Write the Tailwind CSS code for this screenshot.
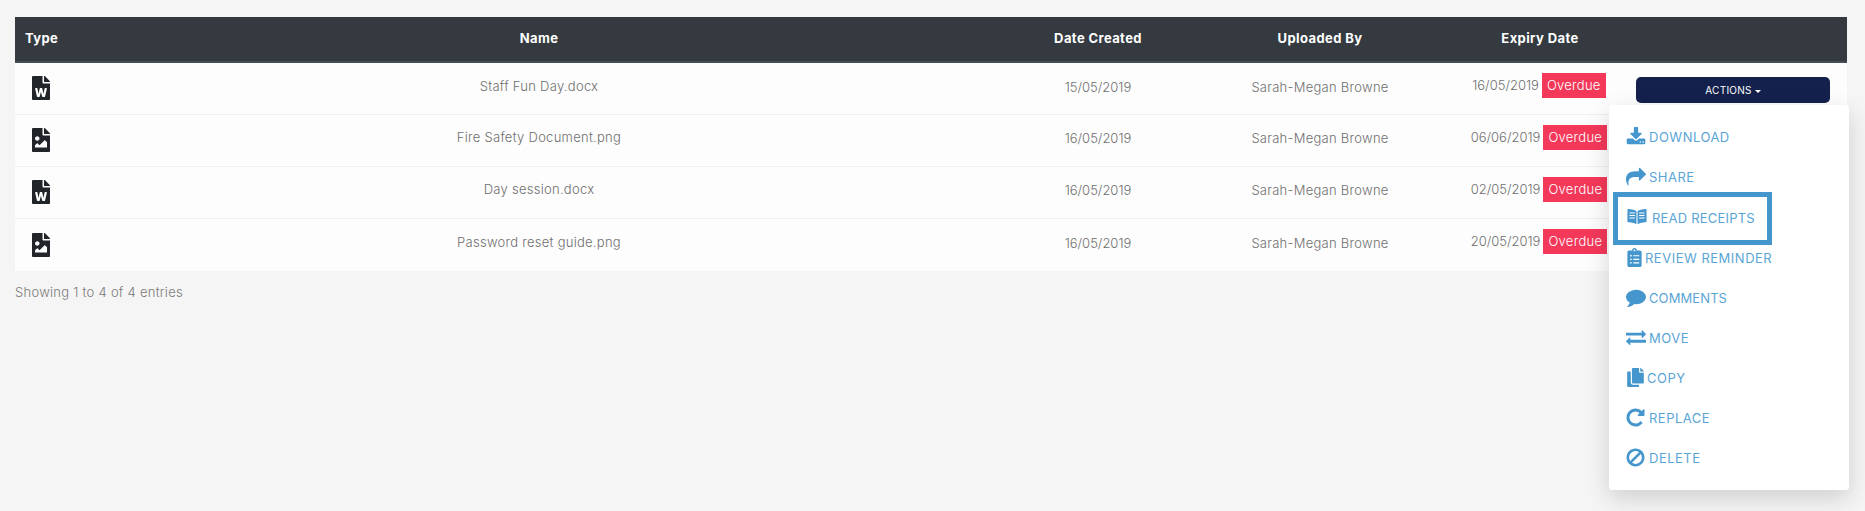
<!DOCTYPE html>
<html lang="en">
<head>
    <meta charset="UTF-8">
    <title>Documents</title>
    <script src="https://cdn.jsdelivr.net/npm/@tailwindcss/browser@4"></script>
</head>
<body class="bg-[#f5f5f5] font-['Inter',sans-serif] text-[13px] text-[#6f6f6f] font-light tracking-[0.27px] h-[511px] overflow-hidden">
    <main class="pt-[17px] pl-[15px] w-[1847px]">
        <table class="w-[1832px] table-fixed border-collapse bg-[#fdfdfd]">
            <thead class="bg-[#343a40] text-white font-bold text-[13px] tracking-[0.4px]">
                <tr class="h-[45px] border-b-2 border-[#454d55]">
                    <th class="w-[53px] text-left pl-[10px] font-bold">Type</th>
                    <th class="w-[942px] font-bold">Name</th>
                    <th class="w-[176px] font-bold">Date Created</th>
                    <th class="w-[268px] font-bold">Uploaded By</th>
                    <th class="w-[172px] font-bold">Expiry Date</th>
                    <th class="w-[221px]"></th>
                </tr>
            </thead>
            <tbody class="text-center">
                <tr class="h-[52px] border-b border-[#eeeef6]">
                    <td class="pl-[17px]"><svg class="w-[18px] h-[24px] fill-[#212529]" viewBox="0 0 384 512"><path d="M224 136V0H24C10.7 0 0 10.7 0 24v464c0 13.3 10.7 24 24 24h336c13.3 0 24-10.7 24-24V160H248c-13.2 0-24-10.8-24-24zm57.1 120H305c7.7 0 13.4 7.1 11.7 14.7l-38 168c-1.2 5.5-6.1 9.3-11.7 9.3h-38c-5.5 0-10.3-3.8-11.6-9.1-25.8-103.5-20.8-81.2-25.6-110.5h-.5c-1.1 14.3-2.4 17.4-25.6 110.5-1.3 5.3-6.1 9.1-11.6 9.1H117c-5.6 0-10.5-3.9-11.7-9.4l-37.8-168c-1.7-7.5 4-14.6 11.7-14.6h24.5c5.7 0 10.7 4 11.8 9.7 15.6 78 20.1 109.5 21 122.2 1.6-10.2 7.3-32.7 29.4-122.7 1.3-5.4 6.1-9.1 11.7-9.1h29.1c5.6 0 10.4 3.8 11.7 9.2 24 100.4 28.8 124 29.6 129.4-.2-11.2-2.6-17.8 21.6-129.2 1-5.6 5.9-9.5 11.5-9.5zM384 121.9v6.1H256V0h6.1c6.4 0 12.5 2.5 17 7l97.9 98c4.5 4.5 7 10.6 7 16.9z"/></svg></td>
                    <td class="-translate-y-[2px]">Staff Fun Day.docx</td>
                    <td class="-translate-y-[1px] tracking-normal">15/05/2019</td>
                    <td class="-translate-y-[1px]">Sarah-Megan Browne</td>
                    <td class="-translate-y-[3px] pr-[2px]"><span class="tracking-normal">16/05/2019</span> <span class="inline-block w-[64px] h-[25px] leading-[25px] bg-[#f4385a] text-white ml-[-1px]">Overdue</span></td>
                    <td class="relative">
                        <button class="ml-[10px] block w-[194px] h-[26px] rounded-[5px] bg-[#14214d] text-white text-[10px] font-normal mt-[4px]">ACTIONS<span class="inline-block align-middle ml-[3px] border-x-[3.5px] border-x-transparent border-t-[3.5px] border-t-white"></span></button>
                        <div class="absolute z-10 top-[42px] -left-[17px] w-[240px] h-[385px] bg-white rounded-[3px] shadow-[0_8px_24px_rgba(0,0,0,0.16)] pt-[13px] pl-[18px] text-left text-[#5aa5d6] text-[13px] font-normal tracking-[0.5px]">
                            <div class="absolute left-[4px] top-[87px] w-[159px] h-[53px] border-[5px] border-[#4596cd]"></div>
                            <div class="flex items-center h-[40.15px]"><span class="w-[22px] shrink-0"><svg class="w-[20px] h-[20px] -ml-[1px] -mt-[3px] fill-[#4596cd]" viewBox="0 0 1792 1792"><path d="M1344 1344q0-26-19-45t-45-19-45 19-19 45 19 45 45 19 45-19 19-45zm256 0q0-26-19-45t-45-19-45 19-19 45 19 45 45 19 45-19 19-45zm128-224v320q0 40-28 68t-68 28h-1472q-40 0-68-28t-28-68v-320q0-40 28-68t68-28h465l135 136q58 56 136 56t136-56l136-136h464q40 0 68 28t28 68zm-325-569q17 41-14 70l-448 448q-18 19-45 19t-45-19l-448-448q-31-29-14-70 17-39 59-39h256v-448q0-26 19-45t45-19h256q26 0 45 19t19 45v448h256q42 0 59 39z"/></svg></span>DOWNLOAD</div>
                            <div class="flex items-center h-[40.15px]"><span class="w-[22px] shrink-0"><svg class="w-[20px] h-[20px] -ml-[1px] -mt-[3px] fill-[#4596cd]" viewBox="0 0 1792 1792"><path d="M1792 640q0 26-19 45l-512 512q-19 19-45 19t-45-19-19-45v-256h-224q-98 0-175.5 6t-154 21.5-133 42.5-105.5 69.5-80 101-48.5 138.5-17.5 181q0 55 5 123 0 6 2.5 23.5t2.5 26.5q0 15-8.5 25t-23.5 10q-16 0-28-17-7-9-13-22t-13.5-30-10.5-24q-127-285-127-451 0-199 53-333 162-403 875-403h224v-256q0-26 19-45t45-19 45 19l512 512q19 19 19 45z"/></svg></span>SHARE</div>
                            <div class="flex items-center h-[40.15px] tracking-[0.2px]"><span class="w-[25px] shrink-0"><svg class="w-[20px] h-[17px] -mt-[3px] fill-[#4596cd]" viewBox="0 0 576 512"><path d="M542.22 32.05c-54.8 3.11-163.72 14.43-230.96 55.59-4.64 2.84-7.27 7.89-7.27 13.17v363.87c0 11.55 12.63 18.85 23.28 13.49 69.18-34.82 169.23-44.32 218.7-46.92 16.89-.89 30.02-14.43 30.02-30.66V62.75c.01-17.71-15.35-31.74-33.77-30.7zM264.73 87.64C197.5 46.48 88.58 35.17 33.78 32.05 15.36 31.01 0 45.04 0 62.75V400.6c0 16.24 13.13 29.78 30.02 30.66 49.49 2.6 149.59 12.11 218.77 46.95 10.62 5.35 23.21-1.94 23.21-13.46V100.63c0-5.29-2.62-10.14-7.27-12.99z"/><path d="M60 150h165M60 225h165M60 300h165M350 150h165M350 225h165M350 300h165" stroke="#fff" stroke-width="32" fill="none"/></svg></span>READ RECEIPTS</div>
                            <div class="flex items-center h-[40.15px]"><span class="w-[18px] shrink-0"><svg class="w-[15px] h-[19px] -mt-[2px] fill-[#4596cd]" viewBox="0 0 384 512"><path d="M336 64h-80c0-35.3-28.7-64-64-64s-64 28.7-64 64H48C21.5 64 0 85.5 0 112v352c0 26.5 21.5 48 48 48h288c26.5 0 48-21.5 48-48V112c0-26.5-21.5-48-48-48zM96 424c-13.3 0-24-10.7-24-24s10.7-24 24-24 24 10.7 24 24-10.7 24-24 24zm0-96c-13.3 0-24-10.7-24-24s10.7-24 24-24 24 10.7 24 24-10.7 24-24 24zm0-96c-13.3 0-24-10.7-24-24s10.7-24 24-24 24 10.7 24 24-10.7 24-24 24zm96-192c13.3 0 24 10.7 24 24s-10.7 24-24 24-24-10.7-24-24 10.7-24 24-24zm128 368c0 4.4-3.6 8-8 8H168c-4.4 0-8-3.6-8-8v-16c0-4.4 3.6-8 8-8h144c4.4 0 8 3.6 8 8v16zm0-96c0 4.4-3.6 8-8 8H168c-4.4 0-8-3.6-8-8v-16c0-4.4 3.6-8 8-8h144c4.4 0 8 3.6 8 8v16zm0-96c0 4.4-3.6 8-8 8H168c-4.4 0-8-3.6-8-8v-16c0-4.4 3.6-8 8-8h144c4.4 0 8 3.6 8 8v16z"/></svg></span>REVIEW REMINDER</div>
                            <div class="flex items-center h-[40.15px] tracking-[0.1px]"><span class="w-[22px] shrink-0"><svg class="w-[20px] h-[20px] -ml-[1px] -mt-[3px] fill-[#4596cd]" viewBox="0 0 1792 1792"><path d="M1792 896q0 174-120 321.5t-326 233-450 85.5q-70 0-145-8-198 175-460 242-49 14-114 22-17 2-30.5-9t-17.5-29v-1q-3-4-.5-12t2-10 4.5-9.5l6-9 7-8.5 8-9q7-8 31-34.5t34.5-38 31-39.5 32.5-51 27-59 26-76q-157-89-247.5-220t-90.5-281q0-130 71-248.5t191-204.5 286-136.5 348-50.5q244 0 450 85.5t326 233 120 321.5z"/></svg></span>COMMENTS</div>
                            <div class="flex items-center h-[40.15px]"><span class="w-[22px] shrink-0"><svg class="w-[20px] h-[20px] -ml-[1px] -mt-[3px] fill-[#4596cd]" viewBox="0 0 1792 1792"><path d="M1792 1184v192q0 13-9.5 22.5t-22.5 9.5h-1376v192q0 13-9.5 22.5t-22.5 9.5q-12 0-24-10l-319-320q-9-9-9-22 0-14 9-23l320-320q9-9 23-9 13 0 22.5 9.5t9.5 22.5v192h1376q13 0 22.5 9.5t9.5 22.5zm0-544q0 14-9 23l-320 320q-9 9-23 9-13 0-22.5-9.5t-9.5-22.5v-192h-1376q-13 0-22.5-9.5t-9.5-22.5v-192q0-13 9.5-22.5t22.5-9.5h1376v-192q0-14 9-23t23-9q12 0 24 10l319 319q9 9 9 23z"/></svg></span>MOVE</div>
                            <div class="flex items-center h-[40.15px]"><span class="w-[20px] shrink-0"><svg class="w-[17px] h-[19px] -mt-[3px] fill-[#4596cd]" viewBox="0 0 448 512"><path d="M320 448v40c0 13.255-10.745 24-24 24H24c-13.255 0-24-10.745-24-24V120c0-13.255 10.745-24 24-24h72v296c0 30.879 25.121 56 56 56h168zm0-344V0H152c-13.255 0-24 10.745-24 24v368c0 13.255 10.745 24 24 24h272c13.255 0 24-10.745 24-24V128H344c-13.2 0-24-10.8-24-24zm120.971-31.029L375.029 7.029A24 24 0 0 0 358.059 0H352v96h96v-6.059a24 24 0 0 0-7.029-16.97z"/></svg></span>COPY</div>
                            <div class="flex items-center h-[40.15px]"><span class="w-[22px] shrink-0"><svg class="w-[21px] h-[21px] -ml-[2px] -mt-[4px] fill-[#4596cd]" viewBox="0 0 1792 1792"><path d="M1664 256v448q0 26-19 45t-45 19h-448q-42 0-59-40-17-39 14-69l138-138q-148-137-349-137-104 0-198.5 40.5t-163.5 109.5-109.5 163.5-40.5 198.5 40.5 198.5 109.5 163.5 163.5 109.5 198.5 40.5q119 0 225-52t179-147q7-10 23-12 15 0 25 9l137 138q9 8 9.5 20.5t-7.5 22.5q-109 132-264 204.5t-327 72.5q-156 0-298-61t-245-164-164-245-61-298 61-298 164-245 245-164 298-61q147 0 284.5 55.5t244.5 156.5l130-129q29-31 70-14 39 17 39 59z"/></svg></span>REPLACE</div>
                            <div class="flex items-center h-[40.15px]"><span class="w-[22px] shrink-0"><svg class="w-[21px] h-[21px] -ml-[2px] -mt-[4px] fill-[#4596cd]" viewBox="0 0 1792 1792"><path d="M1440 893q0-161-87-295l-754 753q137 89 297 89 111 0 211.5-43.5t173.5-116.5 116-174.5 43-212.5zm-999 299l755-754q-135-91-300-91-148 0-273 73t-198 199-73 274q0 162 89 299zm1223-299q0 157-61 300t-163.5 246-245 164-298.5 61-298.5-61-245-164-163.5-246-61-300 61-299.5 163.5-245.5 245-164 298.5-61 298.5 61 245 164 163.5 245.5 61 299.5z"/></svg></span>DELETE</div>
                        </div>
                    </td>
                </tr>
                <tr class="h-[52px] border-b border-[#eeeef6]">
                    <td class="pl-[17px]"><svg class="w-[18px] h-[24px] fill-[#212529]" viewBox="0 0 384 512"><path d="M384 121.941V128H256V0h6.059a24 24 0 0 1 16.97 7.029l97.941 97.941a24.002 24.002 0 0 1 7.03 16.971zM248 160c-13.2 0-24-10.8-24-24V0H24C10.745 0 0 10.745 0 24v464c0 13.255 10.745 24 24 24h336c13.255 0 24-10.745 24-24V160H248zm-135.455 16c26.51 0 48 21.49 48 48s-21.49 48-48 48-48-21.49-48-48 21.491-48 48-48zm208 240h-256l.485-48.485L104.545 328c4.686-4.686 11.799-4.201 16.485.485L160.545 368 264.06 264.485c4.686-4.686 12.284-4.686 16.971 0L320.545 304v112z"/></svg></td>
                    <td class="-translate-y-[2px]">Fire Safety Document.png</td>
                    <td class="-translate-y-[1px] tracking-normal">16/05/2019</td>
                    <td class="-translate-y-[1px]">Sarah-Megan Browne</td>
                    <td class="-translate-y-[3px] pr-[2px]"><span class="tracking-normal">06/06/2019</span> <span class="inline-block w-[64px] h-[25px] leading-[25px] bg-[#f4385a] text-white ml-[-1px]">Overdue</span></td>
                    <td></td>
                </tr>
                <tr class="h-[52px] border-b border-[#eeeef6]">
                    <td class="pl-[17px]"><svg class="w-[18px] h-[24px] fill-[#212529]" viewBox="0 0 384 512"><path d="M224 136V0H24C10.7 0 0 10.7 0 24v464c0 13.3 10.7 24 24 24h336c13.3 0 24-10.7 24-24V160H248c-13.2 0-24-10.8-24-24zm57.1 120H305c7.7 0 13.4 7.1 11.7 14.7l-38 168c-1.2 5.5-6.1 9.3-11.7 9.3h-38c-5.5 0-10.3-3.8-11.6-9.1-25.8-103.5-20.8-81.2-25.6-110.5h-.5c-1.1 14.3-2.4 17.4-25.6 110.5-1.3 5.3-6.1 9.1-11.6 9.1H117c-5.6 0-10.5-3.9-11.7-9.4l-37.8-168c-1.7-7.5 4-14.6 11.7-14.6h24.5c5.7 0 10.7 4 11.8 9.7 15.6 78 20.1 109.5 21 122.2 1.6-10.2 7.3-32.7 29.4-122.7 1.3-5.4 6.1-9.1 11.7-9.1h29.1c5.6 0 10.4 3.8 11.7 9.2 24 100.4 28.8 124 29.6 129.4-.2-11.2-2.6-17.8 21.6-129.2 1-5.6 5.9-9.5 11.5-9.5zM384 121.9v6.1H256V0h6.1c6.4 0 12.5 2.5 17 7l97.9 98c4.5 4.5 7 10.6 7 16.9z"/></svg></td>
                    <td class="-translate-y-[2px]">Day session.docx</td>
                    <td class="-translate-y-[1px] tracking-normal">16/05/2019</td>
                    <td class="-translate-y-[1px]">Sarah-Megan Browne</td>
                    <td class="-translate-y-[3px] pr-[2px]"><span class="tracking-normal">02/05/2019</span> <span class="inline-block w-[64px] h-[25px] leading-[25px] bg-[#f4385a] text-white ml-[-1px]">Overdue</span></td>
                    <td></td>
                </tr>
                <tr class="h-[53px]">
                    <td class="pl-[17px]"><svg class="w-[18px] h-[24px] fill-[#212529]" viewBox="0 0 384 512"><path d="M384 121.941V128H256V0h6.059a24 24 0 0 1 16.97 7.029l97.941 97.941a24.002 24.002 0 0 1 7.03 16.971zM248 160c-13.2 0-24-10.8-24-24V0H24C10.745 0 0 10.745 0 24v464c0 13.255 10.745 24 24 24h336c13.255 0 24-10.745 24-24V160H248zm-135.455 16c26.51 0 48 21.49 48 48s-21.49 48-48 48-48-21.49-48-48 21.491-48 48-48zm208 240h-256l.485-48.485L104.545 328c4.686-4.686 11.799-4.201 16.485.485L160.545 368 264.06 264.485c4.686-4.686 12.284-4.686 16.971 0L320.545 304v112z"/></svg></td>
                    <td class="-translate-y-[2px]">Password reset guide.png</td>
                    <td class="-translate-y-[1px] tracking-normal">16/05/2019</td>
                    <td class="-translate-y-[1px]">Sarah-Megan Browne</td>
                    <td class="-translate-y-[3px] pr-[2px]"><span class="tracking-normal">20/05/2019</span> <span class="inline-block w-[64px] h-[25px] leading-[25px] bg-[#f4385a] text-white ml-[-1px]">Overdue</span></td>
                    <td></td>
                </tr>
            </tbody>
        </table>
        <p class="mt-[12px] text-[#7a7a7a]">Showing 1 to 4 of 4 entries</p>
    </main>
</body>
</html>
